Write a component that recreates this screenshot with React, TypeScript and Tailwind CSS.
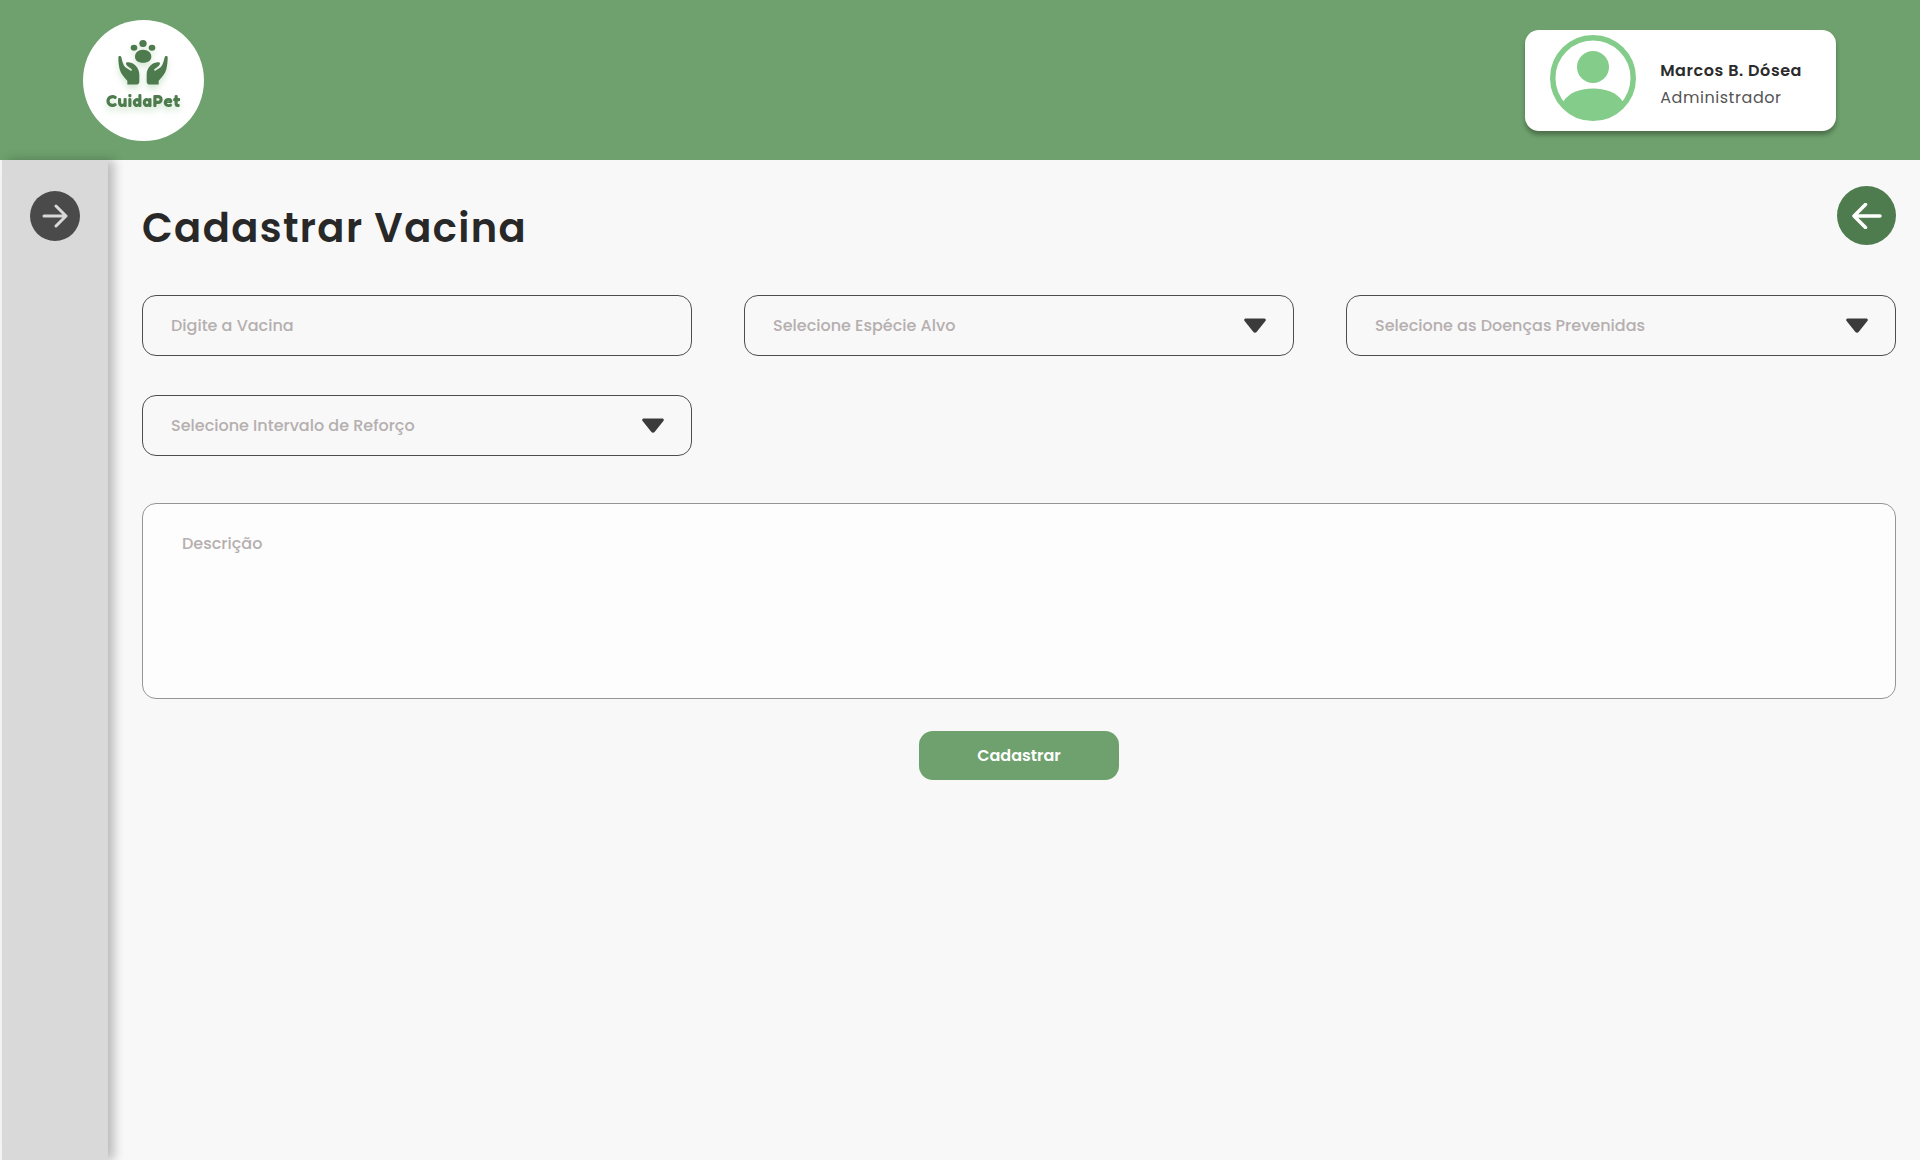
import type { ReactNode } from "react";

function Logo() {
  return (
    <a
      href="#"
      aria-label="CuidaPet"
      className="flex size-[121px] shrink-0 flex-col items-center rounded-full bg-white pt-5 text-[#4d7b4d] no-underline"
    >
      <svg
        viewBox="143 90 156 134"
        className="h-[45px] w-[52px] overflow-visible drop-shadow-[0_4px_3px_rgba(110,175,110,0.3)]"
        fill="currentColor"
        aria-hidden="true"
      >
        <ellipse cx="191" cy="113" rx="10" ry="9" />
        <ellipse cx="218" cy="100" rx="11" ry="10.500" />
        <ellipse cx="245" cy="113" rx="10" ry="9" />
        <path d="M218 119c15 0 25 9 25 21 0 11-10 18-25 18s-24-7-24-18c0-12 9-21 24-21z" />
        <path
          id="hand"
          d="M144 141c1-5 8-4 9 0 3 12 5 22 12 30l15 10c3 2 6-1 4-4l-12-9c-7-6-6-12 0-12 14-1 35 13 35 37v20c0 7-3 10-10 10h-26v-11c-9-11-19-20-23-35-3-12-4-24-4-36z"
        />
        <use href="#hand" transform="matrix(-1 0 0 1 436 0)" />
      </svg>
      <span className="mt-1 font-['Fredoka_One','Fredoka','Poppins',sans-serif] text-[17px] leading-6 font-bold tracking-[0.035em] drop-shadow-[0_4px_3px_rgba(110,175,110,0.3)]">
        CuidaPet
      </span>
    </a>
  );
}

function Avatar() {
  return (
    <svg viewBox="0 0 86 86" className="size-[86px] shrink-0" aria-hidden="true">
      <circle cx="43" cy="43" r="40.250" fill="white" stroke="#84cc8a" strokeWidth="5.500" />
      <circle cx="43" cy="32" r="16" fill="#84cc8a" />
      <path d="M13 67C19 57 31 53.500 43 53.500S67 57 73 67A38.400 38.400 0 0 1 13 67z" fill="#84cc8a" />
    </svg>
  );
}

function SelectField({ id, label }: { id: string; label: string }) {
  return (
    <div className="relative">
      <select
        id={id}
        aria-label={label}
        defaultValue=""
        className="h-[61px] w-full appearance-none rounded-[14px] border border-[#4d4d4d] bg-transparent pr-16 pl-7 text-base font-medium text-[#b5afaf]"
      >
        <option value="">{label}</option>
      </select>
      <svg
        viewBox="0 0 22 15"
        className="pointer-events-none absolute top-[23px] right-7 h-[15px] w-[22px]"
        aria-hidden="true"
      >
        <path
          d="M2 .500h18c1.700 0 2.300 1.300 1.400 2.600l-8.600 10.700c-1 1.300-2.600 1.300-3.600 0L.600 3.100C-.300 1.800.300.500 2 .500z"
          fill="#3b3b3b"
        />
      </svg>
    </div>
  );
}

function ArrowButton({ label, className, children }: { label: string; className: string; children: ReactNode }) {
  return (
    <button
      type="button"
      aria-label={label}
      className={"flex shrink-0 items-center justify-center rounded-full " + className}
    >
      {children}
    </button>
  );
}

export default function App() {
  return (
    <div className="flex min-h-screen flex-col bg-[#f8f8f8] font-['Poppins','Inter',sans-serif]">
      <header className="flex h-40 items-center justify-between bg-[#6ea16d] pr-21 pl-[83px]">
        <Logo />
        <div className="flex h-[101px] items-center gap-6 rounded-[14px] bg-white pr-[34px] pl-[25px] shadow-[0_4px_4px_rgba(0,0,0,0.3)]">
          <div className="pb-1">
            <Avatar />
          </div>
          <div className="pt-2 text-base leading-[27px] tracking-[0.035em]">
            <p className="font-semibold text-[#2b2b2b]">Marcos B. Dósea</p>
            <p className="text-[#555555]">Administrador</p>
          </div>
        </div>
      </header>

      <div className="flex grow">
        <aside className="ml-0.5 flex w-[106px] shrink-0 justify-center bg-[#d9d9d9] pt-[31px] shadow-[6px_0_10px_rgba(0,0,0,0.25)]">
          <ArrowButton label="Abrir menu" className="size-[50px] bg-[#4a4a4a]">
            <svg
              viewBox="0 0 26 24"
              className="h-6 w-[26px]"
              fill="none"
              stroke="#d9d9d9"
              strokeWidth="3"
              strokeLinecap="round"
              strokeLinejoin="round"
              aria-hidden="true"
            >
              <path d="M2 12h22M14 2l10 10-10 10" />
            </svg>
          </ArrowButton>
        </aside>

        <main className="min-w-0 grow pt-[26px] pr-6 pl-[34px]">
          <div className="flex items-start justify-between">
            <h1 className="pt-3 text-[40px] leading-[60px] font-semibold tracking-[0.035em] text-[#282828]">
              Cadastrar Vacina
            </h1>
            <ArrowButton label="Voltar" className="size-[59px] bg-[#4e7c4e]">
              <svg
                viewBox="0 0 30 26"
                className="h-[26px] w-[30px]"
                fill="none"
                stroke="white"
                strokeWidth="3.500"
                strokeLinecap="round"
                strokeLinejoin="round"
                aria-hidden="true"
              >
                <path d="M28 13H2M13.500 1.500L2 13l11.500 11.500" />
              </svg>
            </ArrowButton>
          </div>

          <form className="mt-[37px]">
            <div className="grid grid-cols-3 gap-x-[52px] gap-y-[39px]">
              <input
                id="vacina"
                type="text"
                aria-label="Digite a Vacina"
                placeholder="Digite a Vacina"
                className="h-[61px] w-full rounded-[14px] border border-[#4d4d4d] bg-transparent px-7 text-base font-medium placeholder:text-[#b5afaf]"
              />
              <SelectField id="especie" label="Selecione Espécie Alvo" />
              <SelectField id="doencas" label="Selecione as Doenças Prevenidas" />
              <SelectField id="intervalo" label="Selecione Intervalo de Reforço" />
            </div>

            <textarea
              id="descricao"
              aria-label="Descrição"
              placeholder="Descrição"
              className="mt-[47px] block h-[196px] w-full resize-none rounded-[14px] border border-[#959595] bg-[#fdfdfd] px-[39px] py-7 text-base font-medium placeholder:text-[#b5afaf]"
            />
            <button
              type="submit"
              className="mx-auto mt-8 block h-[49px] w-[200px] rounded-[14px] bg-[#6ea16d] text-base font-semibold text-white"
            >
              Cadastrar
            </button>
          </form>
        </main>
      </div>
    </div>
  );
}
